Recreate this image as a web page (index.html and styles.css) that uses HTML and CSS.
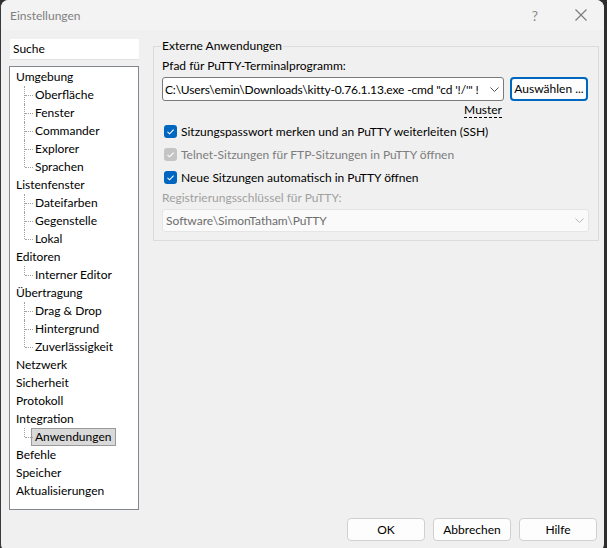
FILE: index.html
```html
<!DOCTYPE html>
<html lang="de">
<head>
<meta charset="utf-8">
<title>Einstellungen</title>
<link rel="stylesheet" href="styles.css">
</head>
<body>
<div class="window">
  <div class="titlebar">
    <span class="title">Einstellungen</span>
    <span class="tb-help">?</span>
    <span class="tb-close">
      <svg width="12" height="12" viewBox="0 0 12 12"><path d="M0.5 0.5 L11.5 11.5 M11.5 0.5 L0.5 11.5" stroke="#7a7a7a" stroke-width="1.1" fill="none"/></svg>
    </span>
  </div>
  <div class="main">
    <div class="sidebar">
      <div class="search">Suche</div>
      <ul class="tree">
        <li class="node">Umgebung</li>
        <li class="child">Oberfläche</li>
        <li class="child">Fenster</li>
        <li class="child">Commander</li>
        <li class="child">Explorer</li>
        <li class="child last">Sprachen</li>
        <li class="node">Listenfenster</li>
        <li class="child">Dateifarben</li>
        <li class="child">Gegenstelle</li>
        <li class="child last">Lokal</li>
        <li class="node">Editoren</li>
        <li class="child last">Interner Editor</li>
        <li class="node">Übertragung</li>
        <li class="child">Drag &amp; Drop</li>
        <li class="child">Hintergrund</li>
        <li class="child last">Zuverlässigkeit</li>
        <li class="node">Netzwerk</li>
        <li class="node">Sicherheit</li>
        <li class="node">Protokoll</li>
        <li class="node">Integration</li>
        <li class="child last"><span class="selected">Anwendungen</span></li>
        <li class="node">Befehle</li>
        <li class="node">Speicher</li>
        <li class="node">Aktualisierungen</li>
      </ul>
    </div>
    <fieldset class="group">
      <legend>Externe Anwendungen</legend>
      <div class="label">Pfad für PuTTY-Terminalprogramm:</div>
      <div class="pathrow">
        <div class="combo">
          <span class="combo-text path-text">C:\Users\emin\Downloads\kitty-0.76.1.13.exe -cmd "cd '!/'" !</span>
          <svg class="chev" width="9" height="5" viewBox="0 0 9 5"><path d="M0.5 0.5 L4.5 4.5 L8.5 0.5" stroke="#555" stroke-width="1" fill="none"/></svg>
        </div>
        <div class="btn-choose">Auswählen ...</div>
      </div>
      <div class="muster-row"><span class="muster">Muster</span></div>
      <div class="check">
        <span class="box"><svg width="13" height="13" viewBox="0 0 13 13"><path d="M3.5 6.8 L5.6 8.8 L9.6 4.6" stroke="#fff" stroke-width="1.1" fill="none"/></svg></span>
        <span>Sitzungspasswort merken und an PuTTY weiterleiten (SSH)</span>
      </div>
      <div class="check disabled">
        <span class="box"><svg width="13" height="13" viewBox="0 0 13 13"><path d="M3.5 6.8 L5.6 8.8 L9.6 4.6" stroke="#fff" stroke-width="1.1" fill="none"/></svg></span>
        <span>Telnet-Sitzungen für FTP-Sitzungen in PuTTY öffnen</span>
      </div>
      <div class="check">
        <span class="box"><svg width="13" height="13" viewBox="0 0 13 13"><path d="M3.5 6.8 L5.6 8.8 L9.6 4.6" stroke="#fff" stroke-width="1.1" fill="none"/></svg></span>
        <span>Neue Sitzungen automatisch in PuTTY öffnen</span>
      </div>
      <div class="label disabled-label">Registrierungsschlüssel für PuTTY:</div>
      <div class="combo combo-disabled">
        <span class="combo-text">Software\SimonTatham\PuTTY</span>
        <svg class="chev" width="9" height="5" viewBox="0 0 9 5"><path d="M0.5 0.5 L4.5 4.5 L8.5 0.5" stroke="#b5b5b5" stroke-width="1" fill="none"/></svg>
      </div>
    </fieldset>
  </div>
  <div class="buttons">
    <div class="btn">OK</div>
    <div class="btn">Abbrechen</div>
    <div class="btn">Hilfe</div>
  </div>
</div>
</body>
</html>
```
FILE: styles.css
```css
html, body {
  margin: 0;
  padding: 0;
  background: #2e2e2e;
  width: 607px;
  height: 548px;
  overflow: hidden;
}
body {
  font-family: Lato, "Noto Sans", sans-serif;
  font-size: 12px;
  color: #000;
}
.window {
  width: 604px;
  height: 552px;
  background: #f0f0f0;
  border-radius: 8px;
  display: flex;
  flex-direction: column;
  box-sizing: border-box;
  border-left: 1px solid #3a3a3a;
}
.titlebar {
  height: 30px;
  display: flex;
  align-items: center;
  background: #f3f3f3;
  border-radius: 8px 8px 0 0;
}
.title {
  margin-left: 9px;
  color: #7f7f7f;
  flex: 1;
}
.tb-help {
  color: #8a8a8a;
  font-size: 14px;
  width: 46px;
  text-align: center;
}
.tb-close {
  width: 46px;
  display: flex;
  justify-content: center;
}
.main {
  display: flex;
  padding: 9px 0 0 8px;
  gap: 14px;
  align-items: flex-start;
}
.sidebar {
  width: 130px;
  display: flex;
  flex-direction: column;
  gap: 6px;
}
.search {
  height: 20px;
  line-height: 20px;
  background: #fff;
  border-bottom: 1px solid #e2e2e2;
  padding-left: 3px;
  margin-left: 1px;
  width: 126px;
}
.tree {
  list-style: none;
  margin: 0;
  padding: 1px 0 0 6px;
  background: #fff;
  border: 1px solid #828790;
  box-sizing: border-box;
  height: 444px;
}
.tree li {
  height: 18px;
  line-height: 18px;
  white-space: nowrap;
  position: relative;
}
.tree .child {
  padding-left: 19px;
}
.tree .child::before {
  content: "";
  position: absolute;
  left: 8px;
  top: 0;
  height: 18px;
  border-left: 1px dotted #a0a0a0;
}
.tree .child.last::before {
  height: 9px;
}
.tree .child::after {
  content: "";
  position: absolute;
  left: 9px;
  top: 9px;
  width: 8px;
  border-top: 1px dotted #a0a0a0;
}
.selected {
  display: inline-block;
  height: 16px;
  line-height: 16px;
  margin-left: -4px;
  padding: 0 4px 0 3px;
  background: #d9d9d9;
  border: 1px solid #9a9a9a;
}
.group {
  margin: 0;
  margin-top: -1px;
  width: 445px;
  box-sizing: border-box;
  border: 1px solid #dcdcdc;
  padding: 4px 9px 8px 8px;
}
.group legend {
  padding: 0 1px;
  margin-left: -1px;
  line-height: 16px;
}
.label {
  line-height: 16px;
}
.pathrow {
  display: flex;
  gap: 6px;
  margin-top: 3px;
}
.combo {
  height: 24px;
  box-sizing: border-box;
  border: 1px solid #7a7a7a;
  border-radius: 3px;
  background: #fff;
  display: flex;
  align-items: center;
  padding: 0 4px 0 2px;
  width: 342px;
  overflow: hidden;
}
.combo-text {
  flex: 1;
  white-space: nowrap;
  overflow: hidden;
}
.path-text {
  letter-spacing: -0.15px;
}
.chev {
  margin-left: 3px;
  flex: none;
}
.btn-choose {
  width: 78px;
  height: 24px;
  box-sizing: border-box;
  border: 2px solid #0067c0;
  border-radius: 4px;
  background: #fdfdfd;
  text-align: center;
  line-height: 20px;
  white-space: nowrap;
}
.muster-row {
  text-align: right;
  width: 340px;
  height: 18px;
  line-height: 16px;
  margin-top: 1px;
}
.muster {
  border-bottom: 1px dashed #000;
}
.check {
  display: flex;
  align-items: center;
  gap: 4px;
  height: 23px;
  margin-left: 2px;
}
.check .box {
  width: 13px;
  height: 13px;
  background: #0067c0;
  border-radius: 3px;
  display: inline-flex;
}
.check.disabled {
  color: #7d7d7d;
}
.check.disabled .box {
  background: #c4c4c4;
}
.disabled-label {
  color: #a0a0a0;
  margin-top: 1px;
}
.combo-disabled {
  margin-top: 3px;
  width: 427px;
  height: 23px;
  background: #fafafa;
  border-color: #e5e5e5;
  color: #6d6d6d;
  padding-left: 3px;
}
.buttons {
  margin-top: auto;
  margin-bottom: 11px;
  display: flex;
  justify-content: flex-end;
  gap: 8px;
  padding-right: 7px;
}
.btn {
  width: 78px;
  height: 23px;
  box-sizing: border-box;
  border: 1px solid #d0d0d0;
  border-radius: 4px;
  background: #fdfdfd;
  text-align: center;
  line-height: 21px;
}
```
